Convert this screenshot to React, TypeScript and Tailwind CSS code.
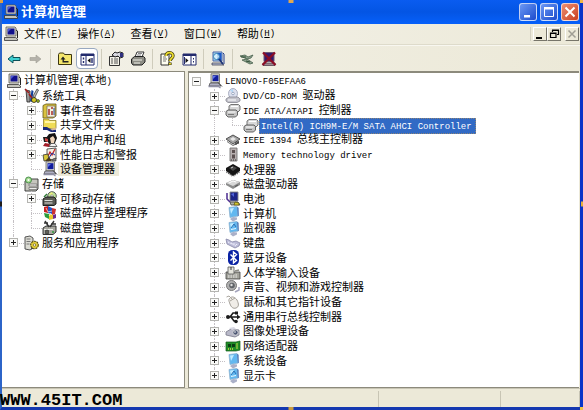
import { useState, type ReactNode } from 'react'

type IconName =
  | 'console' | 'tools' | 'events' | 'share' | 'users' | 'perf' | 'device' | 'storage'
  | 'removable' | 'defrag' | 'diskmgmt' | 'services' | 'cdrom' | 'ide' | 'ieee' | 'memory'
  | 'cpu' | 'disk' | 'battery' | 'computer' | 'display' | 'keyboard' | 'bluetooth' | 'hid'
  | 'sound' | 'mouse' | 'usb' | 'imaging' | 'network'

interface TreeNode {
  label: string
  icon: IconName
  closed?: boolean
  selected?: 'active' | 'inactive'
  children?: TreeNode[]
}

const CONSOLE_TREE: TreeNode = {
  label: '计算机管理(本地)',
  icon: 'console',
  children: [
    {
      label: '系统工具',
      icon: 'tools',
      children: [
        { label: '事件查看器', icon: 'events', closed: true },
        { label: '共享文件夹', icon: 'share', closed: true },
        { label: '本地用户和组', icon: 'users', closed: true },
        { label: '性能日志和警报', icon: 'perf', closed: true },
        { label: '设备管理器', icon: 'device', selected: 'inactive' },
      ],
    },
    {
      label: '存储',
      icon: 'storage',
      children: [
        { label: '可移动存储', icon: 'removable', closed: true },
        { label: '磁盘碎片整理程序', icon: 'defrag' },
        { label: '磁盘管理', icon: 'diskmgmt' },
      ],
    },
    { label: '服务和应用程序', icon: 'services', closed: true },
  ],
}

const DEVICE_TREE: TreeNode = {
  label: 'LENOVO-F05EFAA6',
  icon: 'device',
  children: [
    { label: 'DVD/CD-ROM 驱动器', icon: 'cdrom', closed: true },
    {
      label: 'IDE ATA/ATAPI 控制器',
      icon: 'ide',
      children: [{ label: 'Intel(R) ICH9M-E/M SATA AHCI Controller', icon: 'ide', selected: 'active' }],
    },
    { label: 'IEEE 1394 总线主控制器', icon: 'ieee', closed: true },
    { label: 'Memory technology driver', icon: 'memory', closed: true },
    { label: '处理器', icon: 'cpu', closed: true },
    { label: '磁盘驱动器', icon: 'disk', closed: true },
    { label: '电池', icon: 'battery', closed: true },
    { label: '计算机', icon: 'computer', closed: true },
    { label: '监视器', icon: 'display', closed: true },
    { label: '键盘', icon: 'keyboard', closed: true },
    { label: '蓝牙设备', icon: 'bluetooth', closed: true },
    { label: '人体学输入设备', icon: 'hid', closed: true },
    { label: '声音、视频和游戏控制器', icon: 'sound', closed: true },
    { label: '鼠标和其它指针设备', icon: 'mouse', closed: true },
    { label: '通用串行总线控制器', icon: 'usb', closed: true },
    { label: '图像处理设备', icon: 'imaging', closed: true },
    { label: '网络适配器', icon: 'network', closed: true },
    { label: '系统设备', icon: 'computer', closed: true },
    { label: '显示卡', icon: 'display', closed: true },
  ],
}

const MENUS = [
  { label: '文件', accessKey: 'F' },
  { label: '操作', accessKey: 'A' },
  { label: '查看', accessKey: 'V' },
  { label: '窗口', accessKey: 'W' },
  { label: '帮助', accessKey: 'H' },
]

const MONITOR = (
  <>
    <path d="M3 1h9l1 1v8H3z" fill="#d8d8d0" stroke="#55554f" strokeWidth=".8" />
    <path d="M4.5 2.5h7v6h-7z" fill="#10108c" />
    <path d="M5 3h3L5 6z" fill="#4a58d8" />
    <path d="M1.5 11.5h11l2 1.5v1.5h-13z" fill="#c4c4bc" stroke="#333" strokeWidth=".8" />
    <path d="M13 4l1.5 1v7" fill="none" stroke="#222" />
  </>
)

const BLUE_SCREEN = (
  <>
    <path d="M4 1.5l8-1 1 9.5-8 1.5z" fill="#62b8f0" stroke="#8fb4d0" strokeWidth=".8" />
    <path d="M5 2.5l4-.5-3 6z" fill="#c2ecff" />
    <path d="M12 .8l1.6 1 .2 8-1 .6z" fill="#4876b8" />
    <path d="M5 13l3-2 4 .5v2L8 15.5z" fill="#aab0c8" />
  </>
)

const ICONS: Record<IconName, ReactNode> = {
  console: MONITOR,
  tools: (
    <>
      <path d="M2 2l4 1v11H3z" fill="#9a9a9a" stroke="#222" strokeWidth=".8" />
      <path d="M6 13l1.5-11 2 1L8 14z" fill="#14409c" />
      <path d="M9 8l4-7 1.5 1-4 8z" fill="#b8b8b8" stroke="#333" strokeWidth=".7" />
      <path d="M1 1l4 4M5 6l3 4" stroke="#a01c1c" strokeWidth="1.5" />
      <circle cx="10" cy="12" r="2.5" fill="#d6c820" stroke="#222" strokeWidth=".8" />
      <circle cx="14" cy="13" r="1.5" fill="#94b820" stroke="#222" strokeWidth=".6" />
    </>
  ),
  events: (
    <>
      <path d="M1 2.5L4 1h10v12l-3 2H1z" fill="#d9c23f" stroke="#625718" strokeWidth=".8" />
      <path d="M5 3h8v11H5z" fill="#f4f0da" stroke="#6a6254" strokeWidth=".7" />
      <path d="M7 6v6M10 4v2m0 2v4" stroke="#a02020" strokeWidth="1.4" />
      <path d="M12 5v7" stroke="#234c98" />
    </>
  ),
  share: (
    <>
      <path d="M1.5 2h5l1 1.5H14v8H1.5z" fill="#f0dc55" stroke="#96852a" strokeWidth=".8" />
      <path d="M3 4h10v2H3z" fill="#fff6a8" />
      <path d="M1 10h4l4 2.5h5V15H9l-4-2H1z" fill="#1b2c7a" />
      <path d="M9 11.5l5-1v2l-4 1z" fill="#d8b890" />
    </>
  ),
  users: (
    <>
      <path d="M4 6l3-4 6-1 2 5-2 5-6 1z" fill="#141414" />
      <path d="M8 6l3-2 2 3-1 4-3 .5z" fill="#f0d6bc" />
      <path d="M1 5h5v5H2z" fill="#1c1c1c" />
      <path d="M3 6l3 1v3l-3-1z" fill="#c44" />
      <path d="M1 14l2-3 5 1-1 3z" fill="#a21c28" />
      <path d="M7 14.5l2-3h4l2 3z" fill="#f2f2f2" stroke="#333" strokeWidth=".7" />
    </>
  ),
  perf: (
    <>
      <path d="M5 2l9-1v11l-9 1z" fill="#f4f0e4" stroke="#333" strokeWidth=".8" />
      <path d="M6 9l2-4 2 3 3-6" stroke="#c42020" fill="none" strokeWidth="1.2" />
      <path d="M7 11l3-5 3 2" stroke="#2034a0" fill="none" />
      <path d="M1 8l5-1 1 7H2z" fill="#d6c63a" stroke="#333" strokeWidth=".8" />
      <path d="M3 14l4-4 3 4" fill="#4a3a1c" />
      <path d="M11 12l3-1v3h-4z" fill="#7d7d7d" stroke="#333" strokeWidth=".6" />
    </>
  ),
  device: (
    <>
      <path d="M4 .8h8.5v9H4z" fill="#dcdcd4" stroke="#66665e" strokeWidth=".8" />
      <path d="M5.5 2.2h6v6h-6z" fill="#101c9c" />
      <path d="M6 3h3L6 6z" fill="#5f74ec" />
      <path d="M3 10h9l2 3H2z" fill="#b0b0c4" stroke="#444" strokeWidth=".7" />
      <path d="M1.5 13.5h10l2 1.5" stroke="#8e8ea4" strokeWidth="1.3" fill="none" />
      <path d="M11 9.5l4 4" stroke="#444" />
    </>
  ),
  storage: (
    <>
      <path d="M1 5l3-2h10v10l-2 2H1z" fill="#c6c6be" stroke="#333" strokeWidth=".9" />
      <path d="M5 8h8v2H5zM5 11.5h8v2H5z" fill="#ececea" stroke="#555" strokeWidth=".6" />
      <circle cx="4.500" cy="4" r="3" fill="#a8dc94" stroke="#2e7a34" strokeWidth=".8" />
      <circle cx="4.500" cy="4" r="1" fill="#fff" />
    </>
  ),
  removable: (
    <>
      <circle cx="10" cy="5" r="4.3" fill="#bce09a" stroke="#333" strokeWidth=".8" />
      <path d="M7 3l3-2 1 3z" fill="#f0ee7e" />
      <circle cx="10" cy="5" r="1.2" fill="#fff" stroke="#555" strokeWidth=".5" />
      <path d="M1 8l3-2h8l2 2v5l-2 1.5H1z" fill="#5a5a54" stroke="#111" strokeWidth=".9" />
      <path d="M2.5 9.5h8M2.5 12h8" stroke="#dededa" />
      <path d="M2 6l3-3" stroke="#2e7a34" strokeWidth="1.5" />
    </>
  ),
  defrag: (
    <>
      <path d="M2 2l4-1v7L2 7z" fill="#c82020" />
      <path d="M6 1l4 2v6L6 8z" fill="#2454c4" />
      <path d="M10 3l4 1-1 5-3 1z" fill="#cc3030" />
      <path d="M2 8l5 1v5l-4-2z" fill="#2c9c3c" />
      <path d="M7 9l4 1v4l-4 1z" fill="#e8c82c" />
      <path d="M11 10l3-1v4l-3 1z" fill="#6c2c8c" />
      <path d="M4 3l2 4 4-1M7 11l2-3" stroke="#f4f4f4" strokeWidth=".7" fill="none" />
    </>
  ),
  diskmgmt: (
    <>
      <path d="M1 8l3-2h10v6l-3 2.5H1z" fill="#a8a8a0" stroke="#222" strokeWidth=".9" />
      <path d="M2 9.5h9M2 12h6" stroke="#f0f0ec" />
      <path d="M3 1l4 6M12 1L8 7M2 3h4M9 4h5" stroke="#343434" strokeWidth="1.4" />
      <circle cx="5" cy="12" r="2" fill="#606058" stroke="#222" strokeWidth=".6" />
      <path d="M10 12h2" stroke="#2e9c3c" strokeWidth="1.5" />
    </>
  ),
  services: (
    <>
      <path d="M1 2l5-1 3 2v10l-3 2-5-1z" fill="#dcdcd4" stroke="#444" strokeWidth=".9" />
      <path d="M2.5 4h4M2.5 6.5h4M2.5 9h3" stroke="#777" />
      <circle cx="10.500" cy="10" r="3.8" fill="#e0cc38" stroke="#554a10" strokeWidth="1.1" strokeDasharray="2 .8" />
      <circle cx="10.500" cy="10" r="1.2" fill="#fff" stroke="#554a10" strokeWidth=".6" />
      <path d="M7 14l2-1" stroke="#333" />
    </>
  ),
  cdrom: (
    <>
      <ellipse cx="8" cy="5.500" rx="4.500" ry="5" fill="#dce0ee" stroke="#9aa0b4" strokeWidth=".8" />
      <path d="M8 5l-3-3 3-1z" fill="#b4d8f4" />
      <circle cx="8" cy="5.500" r="1.3" fill="#fff" stroke="#7c8cac" strokeWidth=".7" />
      <path d="M1 11l3-2h9l2 2v2l-3 1.5H3L1 13z" fill="#c4c4cc" stroke="#85858f" strokeWidth=".8" />
      <path d="M3 12h8" stroke="#fff" />
    </>
  ),
  ide: (
    <>
      <path d="M4 6V3l2-1.5h7.500L15 3v4l-2 2H4z" fill="#d8d8d8" stroke="#666" strokeWidth=".9" />
      <path d="M1 12V8.500L3 7h8l1.500 1.500V12l-2 2H3z" fill="#c4c4c4" stroke="#555" strokeWidth=".9" />
      <path d="M3 9h7.500M6 3.500h7" stroke="#fff" />
      <path d="M3 11.500h6" stroke="#777" />
    </>
  ),
  ieee: (
    <>
      <path d="M1 7l7-4 7 4-7 5z" fill="#a4a4a4" stroke="#444" strokeWidth=".9" />
      <path d="M5 7l3-2 3 2-3 2z" fill="#e8e8e8" />
      <path d="M2 9l6 4 6-4v2l-6 3-6-4z" fill="#6c6c6c" />
      <path d="M11 10v3m2-4v3" stroke="#222" />
    </>
  ),
  memory: (
    <>
      <path d="M5 1h7v13H5z" fill="#b8b0b0" stroke="#777" strokeWidth=".9" />
      <path d="M7 3h3v3H7zM7 7.5h3v4H7z" fill="#5c5050" />
      <path d="M6 13h5" stroke="#333" strokeDasharray="1 1" />
    </>
  ),
  cpu: (
    <>
      <path d="M1 6l7-4 7 4v3l-7 5-7-5z" fill="#151515" />
      <path d="M4 6l4-2 4 2-4 3z" fill="#484848" />
      <path d="M6 6l2-1" stroke="#ccc" />
      <path d="M1.5 10l6 4m1 0l6-4" stroke="#555" strokeWidth="1.5" strokeDasharray="1 1" />
    </>
  ),
  disk: (
    <>
      <path d="M1 7l7-3 7 2v3l-7 4-7-4z" fill="#8c8c8c" />
      <path d="M1 7l7-3 7 2-7 4z" fill="#d8d8d8" />
      <path d="M4 7l4-2 3 1" stroke="#fff" fill="none" />
      <path d="M10 10.5l3-1.5" stroke="#555" />
    </>
  ),
  battery: (
    <>
      <path d="M5 1h8v9H5z" fill="#1c2488" stroke="#888" strokeWidth=".9" />
      <path d="M6 3l3-1v4z" fill="#5064dc" />
      <path d="M2 2v6l3 3" stroke="#4c2c90" fill="none" strokeWidth="1.5" />
      <path d="M5 11h8l2 3H6z" fill="#b0b0a4" stroke="#333" strokeWidth=".7" />
      <path d="M10 11l4 1v2h-5z" fill="#d4c830" stroke="#574f0c" strokeWidth=".7" />
    </>
  ),
  computer: BLUE_SCREEN,
  display: (
    <>
      {BLUE_SCREEN}
      <path d="M6 7l3-4 2 3" stroke="#2970b4" fill="none" />
      <path d="M6 8.5l5-1" stroke="#e8f8ff" />
    </>
  ),
  keyboard: (
    <>
      <path d="M1 4l3 1 3 2 4-1 4 2-1 3-4 2-8-4z" fill="#bcbcd8" stroke="#8888a8" strokeWidth=".8" />
      <path d="M3 7l8 4M6 8l7 2" stroke="#f2f2ff" strokeDasharray="1.5 1" />
    </>
  ),
  bluetooth: (
    <>
      <rect x="3" y="0" width="11" height="15" rx="4.500" fill="#0a22a4" />
      <path d="M5.5 4.5l6 6-3 2.5V2l3 2.5-6 6" stroke="#fff" strokeWidth="1.4" fill="none" />
    </>
  ),
  hid: (
    <>
      <path d="M1 7h14v7H1z" fill="#a4a49c" stroke="#444" strokeWidth=".8" />
      <path d="M3 10h10M3 12h10" stroke="#eee" strokeDasharray="1.5 1" />
      <path d="M3 2h6v7H3z" fill="#e4e4dc" stroke="#555" strokeWidth=".8" />
      <path d="M6 2v3" stroke="#333" />
      <path d="M10 6l4-1" stroke="#8c8c84" strokeWidth="1.5" />
    </>
  ),
  sound: (
    <>
      <circle cx="6.500" cy="6.500" r="5" fill="#b0b0b0" stroke="#777" />
      <circle cx="7" cy="6.500" r="2.8" fill="#606468" />
      <circle cx="6.500" cy="6" r="1.2" fill="#ddd" />
      <path d="M10 13l4-2v-3" stroke="#a4a4bc" strokeWidth="1.5" fill="none" />
    </>
  ),
  mouse: (
    <>
      <path d="M5 4c2-2 5-1 7 2 2 4 2 7-1 8s-5-1-6-4-2-4 0-6z" fill="#f0ede8" stroke="#99948c" strokeWidth=".9" />
      <path d="M5 7l5-3M7 5L4 2 1.5 3" stroke="#a8a49c" fill="none" />
    </>
  ),
  usb: (
    <>
      <path d="M2 8h11M5 8l3-4h3M6 8l3 4h2" stroke="#1c1c1c" strokeWidth="1.5" fill="none" />
      <circle cx="3" cy="8" r="2" fill="#1c1c1c" />
      <path d="M12 5.5l3.5 2.5-3.5 2.5zM10 2.5h3v3h-3z" fill="#1c1c1c" />
      <circle cx="11" cy="12.500" r="1.8" fill="#1c1c1c" />
    </>
  ),
  imaging: (
    <>
      <path d="M1 8l5-3 8 1v5l-4 2-9-2z" fill="#b8b8c8" stroke="#777788" strokeWidth=".8" />
      <path d="M4 4l5-1 2 2-4 1z" fill="#d8d8e4" />
      <circle cx="10.500" cy="8.500" r="2.6" fill="#4c5674" stroke="#ddd" strokeWidth=".8" />
      <circle cx="10" cy="8" r=".8" fill="#fff" />
    </>
  ),
  network: (
    <>
      <path d="M1 4h10l4-1v9l-4 1H1z" fill="#208c28" stroke="#145c1a" strokeWidth=".7" />
      <path d="M3 6h3v3H3zM7 6h3v3H7z" fill="#0c3c14" />
      <path d="M12 5v6" stroke="#c8dc48" />
      <path d="M3 11h6" stroke="#d4dc4c" strokeDasharray="1 1" strokeWidth="1.5" />
    </>
  ),
}

function Icon({ children }: { children: ReactNode }) {
  return (
    <svg className="size-4 shrink-0" viewBox="0 0 16 16" fill="none" aria-hidden="true">
      {children}
    </svg>
  )
}

// Latin runs are set in half-width cells, so they get a smaller mono face than the Chinese runs.
function MixedText({ text }: { text: string }) {
  return (
    <>
      {text.split(/([\x20-\x7e]+)/).filter(Boolean).map((part, i) =>
        /^[\x20-\x7e]/.test(part) ? (
          <span key={i} className="font-['Liberation_Mono',monospace] text-[9px] whitespace-pre">{part}</span>
        ) : (
          part
        ),
      )}
    </>
  )
}

type Guide = 'blank' | 'through' | 'tee' | 'end'

interface Row {
  node: TreeNode
  guides: Guide[]
}

function flatten(node: TreeNode, guides: Guide[], closed: Set<string>): Row[] {
  const rows: Row[] = [{ node, guides }]
  if (closed.has(node.label)) return rows
  const inherited = guides.map((g): Guide => (g === 'tee' || g === 'through' ? 'through' : 'blank'))
  const children = node.children ?? []
  children.forEach((child, i) => {
    const own: Guide = i === children.length - 1 ? 'end' : 'tee'
    rows.push(...flatten(child, [...inherited, own], closed))
  })
  return rows
}

function GuideCell({ guide, children }: { guide: Guide; children?: ReactNode }) {
  return (
    <span className="relative flex w-[18px] shrink-0 items-center self-stretch pl-[3px]">
      {(guide === 'through' || guide === 'tee') && (
        <span className="absolute inset-y-0 left-[7px] border-l border-dotted border-[#c4c0c4]" />
      )}
      {guide === 'end' && <span className="absolute top-0 left-[7px] h-1/2 border-l border-dotted border-[#c4c0c4]" />}
      {(guide === 'tee' || guide === 'end') && (
        <span className="absolute top-1/2 right-0 left-[7px] border-t border-dotted border-[#c4c0c4]" />
      )}
      {children}
    </span>
  )
}

function Expander({ open, label, onClick }: { open: boolean; label: string; onClick: () => void }) {
  return (
    <button
      type="button"
      onClick={onClick}
      aria-label={`${open ? '折叠' : '展开'} ${label}`}
      className="relative flex size-[9px] items-center justify-center border border-[#b4b4b0] bg-[#fafaf8]"
    >
      <svg className="size-[5px] shrink-0" viewBox="0 0 5 5" aria-hidden="true">
        <path d={open ? 'M0 2h5v1H0z' : 'M0 2h2V0h1v2h2v1H3v2H2V3H0z'} fill="#222" />
      </svg>
    </button>
  )
}

function Tree({ root, label, rootExpander, className }: {
  root: TreeNode
  label: string
  rootExpander?: boolean
  className: string
}) {
  const [closed, setClosed] = useState<Set<string>>(new Set())
  const rows = flatten(root, rootExpander ? ['blank'] : [], closed)

  const toggle = (name: string) => {
    const next = new Set(closed)
    if (!next.delete(name)) next.add(name)
    setClosed(next)
  }

  return (
    <ul aria-label={label} className={`grid auto-rows-fr ${className}`}>
      {rows.map(({ node, guides }) => {
        const expandable = node.closed || (node.children && (node !== root || rootExpander))
        return (
          <li key={node.label} className="flex min-h-0 items-center">
            {guides.map((guide, i) => (
              <GuideCell key={i} guide={guide}>
                {i === guides.length - 1 && expandable && (
                  <Expander
                    open={!node.closed && !closed.has(node.label)}
                    label={node.label}
                    onClick={() => toggle(node.label)}
                  />
                )}
              </GuideCell>
            ))}
            <Icon>{ICONS[node.icon]}</Icon>
            <span
              className={`pl-0.5 text-[11px] leading-[14px] whitespace-nowrap ${
                node.selected === 'active'
                  ? 'bg-[#316ac5] pr-1 text-white outline outline-dotted -outline-offset-1 outline-[#8c8478]'
                  : node.selected === 'inactive'
                    ? 'bg-[#ece9d8] pr-1'
                    : ''
              }`}
            >
              <MixedText text={node.label} />
            </span>
          </li>
        )
      })}
    </ul>
  )
}

function ToolButton({ label, pressed, disabled, children }: {
  label: string
  pressed?: boolean
  disabled?: boolean
  children: ReactNode
}) {
  return (
    <button
      type="button"
      aria-label={label}
      aria-pressed={pressed}
      disabled={disabled}
      className={`flex h-[21px] w-[22px] items-center justify-center rounded-sm border ${
        pressed ? 'border-[#98a8c0] bg-white' : 'border-transparent'
      }`}
    >
      <Icon>{children}</Icon>
    </button>
  )
}

function ToolSeparator() {
  return <span className="mx-[3px] h-5 border-l border-[#cfccbc]" />
}

const PANE_WINDOW = (
  <>
    <path d="M2 3h13v11H2z" fill="#fff" stroke="#222a6c" />
    <path d="M2 3h13v2H2z" fill="#222a6c" />
  </>
)

function Toolbar() {
  return (
    <div
      role="toolbar"
      aria-label="工具栏"
      className="flex h-[26px] items-center border-t border-[#f8f7f0] bg-linear-to-r from-[#f3f1e8] to-[#ece9d8] pl-px"
    >
      <ToolButton label="后退">
        <path d="M2 8l5-4v2.5h7v3H7V12z" fill="#3fcfd0" stroke="#0b5058" />
      </ToolButton>
      <ToolButton label="前进" disabled>
        <path d="M13 8L8 4v2.5H2v3h6V12z" fill="#b4b2aa" stroke="#a09e94" strokeWidth=".6" />
      </ToolButton>
      <ToolSeparator />
      <ToolButton label="向上">
        <path d="M1.5 3.5l1-1.5h4l1 1.5h7v10h-13z" fill="#f4e66c" stroke="#3c3610" />
        <path d="M6 5.5L3.5 8.500H5.500v3h6V10H6.900V8.500h1.600z" fill="#222" />
      </ToolButton>
      <ToolButton label="显示/隐藏控制台树" pressed>
        {PANE_WINDOW}
        <path d="M7 5v9" stroke="#222a6c" />
        <path d="M4.500 6.500v2m0 1.500v2m8.500-5v5" stroke="#222a6c" strokeWidth="1.4" />
        <path d="M11.5 7v5L8.500 9.500z" fill="#111" />
      </ToolButton>
      <ToolSeparator />
      <ToolButton label="属性">
        <path d="M1.5 5.5h10v9h-10z" fill="#f4f2e8" stroke="#333" />
        <path d="M3 8h2m1 0h4M3 10h2m1 0h4M3 12h2m1 0h4" stroke="#555" />
        <path d="M4 4l3-3 2 1 3-1 3 1v4l-3 1-2-2-3 1z" fill="#d8d8e0" stroke="#222" />
        <path d="M12 2h3v4h-3z" fill="#303080" />
      </ToolButton>
      <ToolButton label="打印">
        <path d="M5 6l2-5h7l-2 5z" fill="#fff" stroke="#333" />
        <path d="M7 4h4M8 2.5h4" stroke="#555" strokeWidth=".7" />
        <path d="M1.5 8l3-2.5h9L15 7v4l-3 3H3l-1.5-2z" fill="#8c8c84" stroke="#222" />
        <path d="M3 9h9M4 12h6" stroke="#f0f0e8" />
      </ToolButton>
      <ToolSeparator />
      <ToolButton label="帮助">
        <path d="M2 3h8v11H2z" fill="#fffef0" stroke="#333" />
        <path d="M4 6h3M4 8h4M4 10h3" stroke="#777" />
        <path d="M7 5c0-5 7.500-4 7 0 0 2-3 2.500-3 5M11 11.500V14" stroke="#3c3808" strokeWidth="3.2" />
        <path d="M7 5c0-5 7.500-4 7 0 0 2-3 2.500-3 5M11 12v1.500" stroke="#ecdc30" strokeWidth="1.8" />
      </ToolButton>
      <ToolButton label="显示/隐藏操作窗格">
        {PANE_WINDOW}
        <path d="M10 5v9" stroke="#222a6c" />
        <path d="M4.500 7v5l3-2.500z" fill="#111" />
        <path d="M12.500 7v1.500m0 1.500v1.500M3.500 6v7" stroke="#222a6c" />
      </ToolButton>
      <ToolSeparator />
      <ToolButton label="扫描检测硬件改动">
        <path d="M3 1h9v9H3z" fill="#a8d8f0" stroke="#4864a8" />
        <path d="M7 2h4.500v7H7z" fill="#1c58c8" />
        <path d="M2 12h9l3 2H2z" fill="#b8c0d8" stroke="#445" strokeWidth=".8" />
        <circle cx="6.500" cy="5.500" r="3" fill="#dff6ff" fillOpacity=".8" stroke="#3684b8" />
        <path d="M9 8l4 5" stroke="#1c3478" strokeWidth="1.8" />
        <path d="M13 2l1 1v10" stroke="#223c8c" />
      </ToolButton>
      <ToolSeparator />
      <ToolButton label="卸载">
        <path d="M1 5l5-1 3 2 5-2-2 3-4 1zM3 9l5-1 6 4-3 1-4-2z" fill="#8fa490" stroke="#48604c" strokeWidth=".8" />
        <path d="M2 6h5m0 4l4 1" stroke="#2e4c34" />
      </ToolButton>
      <ToolButton label="停用">
        <path d="M3 1.5h10v9H3z" fill="#34186c" stroke="#6c5874" />
        <path d="M2 12h12v2.5H2z" fill="#9a8890" stroke="#443040" strokeWidth=".7" />
        <path d="M2 1.5L14.500 14M14 1.5L1.500 14" stroke="#8c0c24" strokeWidth="2.2" />
      </ToolButton>
    </div>
  )
}

function CaptionButton({ label, close, children }: { label: string; close?: boolean; children: ReactNode }) {
  return (
    <button
      type="button"
      aria-label={label}
      className={`flex size-[18px] items-center justify-center rounded-[3px] border border-white/70 bg-linear-to-br ${
        close ? 'from-[#ec8e70] to-[#c83c1c]' : 'from-[#6c98f4] to-[#1c48cc]'
      }`}
    >
      <Icon>{children}</Icon>
    </button>
  )
}

function MdiButton({ label, disabled, children }: { label: string; disabled?: boolean; children: ReactNode }) {
  return (
    <button
      type="button"
      aria-label={label}
      disabled={disabled}
      className="flex h-[14px] w-[14px] items-center justify-center border border-t-white border-r-[#77756a] border-b-[#77756a] border-l-white bg-[#ece9d8]"
    >
      <svg className="size-3 shrink-0" viewBox="0 0 12 12" fill="none" aria-hidden="true">{children}</svg>
    </button>
  )
}

// selection grips on the window outline
function Grips() {
  return (
    <div aria-hidden="true">
      <span className="absolute top-0 -left-0.5 size-[3px] bg-[#e0a040]" />
      <span className="absolute top-0 left-1/2 h-[3px] w-[5px] -translate-x-1/2 bg-[#e0a850]" />
      <span className="absolute top-0 -right-[3px] size-[3px] bg-[#f0b848]" />
      <span className="absolute top-1/2 -left-0.5 h-[5px] w-[2px] -translate-y-1/2 bg-[#201c18]" />
      <span className="absolute top-1/2 -right-[3px] h-[5px] w-[2px] -translate-y-1/2 bg-[#e8b03c]" />
      <span className="absolute -bottom-[3px] left-1/2 h-[3px] w-[5px] -translate-x-1/2 bg-[#c89c40]" />
      <span className="absolute -right-[3px] -bottom-[3px] size-[3px] bg-[#f0c448]" />
    </div>
  )
}

export default function App() {
  return (
    <div className="relative flex min-h-screen flex-col border-r-[3px] border-b-[3px] border-l-2 border-r-[#0a34c8] border-b-[#1438b0] border-l-[#2c64c8] bg-[#ece9d8] font-['Liberation_Sans','Noto_Sans_CJK_SC',sans-serif] text-black">
      <header className="flex h-6 items-center bg-linear-to-b from-[#0a5cf0] via-[#0455e4] to-[#0660fa] pr-px pl-px">
        <Icon>{MONITOR}</Icon>
        <h1 className="flex-1 pl-0.5 text-[13px] leading-5 font-bold text-white">计算机管理</h1>
        <div className="flex gap-[3px]">
          <CaptionButton label="最小化">
            <path d="M4 11h6v2.5H4z" fill="#fff" />
          </CaptionButton>
          <CaptionButton label="最大化">
            <path d="M3.5 3.5h9v9h-9z" stroke="#fff" />
            <path d="M3 3h10v2.5H3z" fill="#fff" />
          </CaptionButton>
          <CaptionButton label="关闭" close>
            <path d="M3.5 3.5l9 9m0-9l-9 9" stroke="#fff" strokeWidth="2" />
          </CaptionButton>
        </div>
      </header>

      <div className="flex h-[21px] items-center border-b border-[#dedbcb] bg-linear-to-r from-[#f6f5ef] to-[#ece9d8] pr-px pl-px">
        <Icon>{MONITOR}</Icon>
        <nav aria-label="菜单栏" className="flex flex-1 gap-[15px] pl-[5px]">
          {MENUS.map((menu) => (
            <button key={menu.accessKey} type="button" className="flex items-center text-[11px] leading-4">
              {menu.label}
              <span className="font-['Liberation_Mono',monospace] text-[9px]">
                (<span className="underline">{menu.accessKey}</span>)
              </span>
            </button>
          ))}
        </nav>
        <div className="flex items-center border-l border-[#d4d1c2] pl-0.5">
          <MdiButton label="最小化子窗口">
            <path d="M2 9h6v2H2z" fill="#000" />
          </MdiButton>
          <MdiButton label="还原子窗口">
            <path d="M4.5 4V2.5h6v4H9M4 2h7" stroke="#000" strokeWidth="1.2" />
            <path d="M2.5 5h5.5v4.5H2.5zM2 5.5h6" stroke="#000" strokeWidth="1.2" />
          </MdiButton>
          <div className="ml-1">
            <MdiButton label="关闭子窗口" disabled>
              <path d="M2.5 2.5l7 7m0-7l-7 7" stroke="#a09e94" strokeWidth="1.5" />
            </MdiButton>
          </div>
        </div>
      </div>

      <Toolbar />

      <main className="flex flex-1 gap-[3px] pr-px">
        <section className="w-[183px] shrink-0 border-t border-r border-b border-[#8c8a7c] bg-white pt-0.5 pl-1">
          <Tree root={CONSOLE_TREE} label="控制台树" className="h-[176px]" />
        </section>
        <section className="flex-1 border-t-2 border-b border-l border-[#8c8a7c] bg-white pt-px">
          <Tree root={DEVICE_TREE} label="设备列表" rootExpander className="h-[309px]" />
        </section>
      </main>

      <footer className="flex h-[19px] items-end border-t border-[#c8c5b4]">
        <span className="-ml-0.5 flex-1 font-['Liberation_Mono',monospace] text-[17px] leading-3 font-bold whitespace-nowrap">
          WWW.45IT.COM
        </span>
        <span className="h-4 w-[122px] border-l border-[#c8c5b4]" />
        <span className="h-4 w-[80px] border-r border-l border-[#c8c5b4]" />
      </footer>

      <Grips />
    </div>
  )
}
